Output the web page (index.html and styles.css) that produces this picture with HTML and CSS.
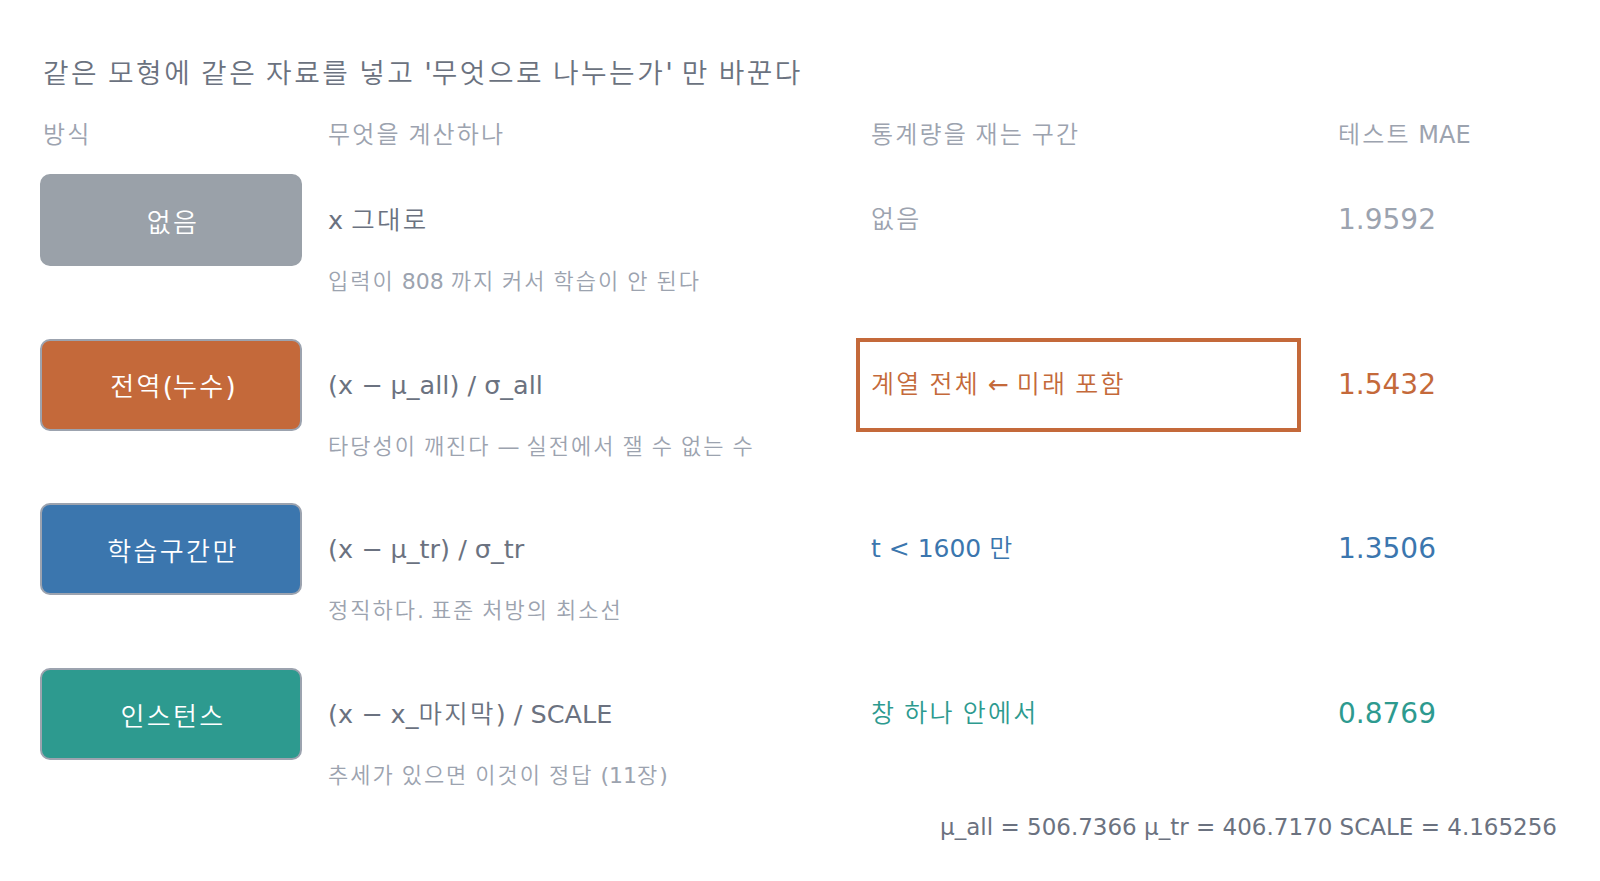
FILE: index.html
```html
<!DOCTYPE html>
<html lang="ko">
<head>
<meta charset="utf-8">
<link rel="stylesheet" href="styles.css">
</head>
<body>
<main class="page">
  <h1 class="title"><span class="ko">같은</span> <span class="ko">모형에</span> <span class="ko">같은</span> <span class="ko">자료를</span> <span class="ko">넣고</span> '<span class="ko">무엇으로</span> <span class="ko">나누는가</span>' <span class="ko">만</span> <span class="ko">바꾼다</span></h1>
  <div class="table">
    <div class="head">
      <div class="hcell c1"><span class="ko">방식</span></div>
      <div class="hcell c2"><span class="ko">무엇을</span> <span class="ko">계산하나</span></div>
      <div class="hcell c3"><span class="ko">통계량을</span> <span class="ko">재는</span> <span class="ko">구간</span></div>
      <div class="hcell c4"><span class="ko">테스트</span> MAE</div>
    </div>

    <div class="row">
      <div class="badge badge-none"><span class="ko">없음</span></div>
      <div class="main">x <span class="ko">그대로</span></div>
      <div class="stat stat-none"><span class="ko">없음</span></div>
      <div class="value v-none">1.9592</div>
      <div class="sub"><span class="ko">입력이</span> 808 <span class="ko">까지</span> <span class="ko">커서</span> <span class="ko">학습이</span> <span class="ko">안</span> <span class="ko">된다</span></div>
    </div>

    <div class="row">
      <div class="badge badge-global"><span class="lbl"><span class="ko">전역</span>(<span class="ko">누수</span>)</span></div>
      <div class="main">(x − μ_all) / σ_all</div>
      <div class="stat stat-global highlight"><span class="hl-text"><span class="ko">계열</span> <span class="ko">전체</span> ← <span class="ko">미래</span> <span class="ko">포함</span></span></div>
      <div class="value v-global">1.5432</div>
      <div class="sub"><span class="ko">타당성이</span> <span class="ko">깨진다</span> — <span class="ko">실전에서</span> <span class="ko">잴</span> <span class="ko">수</span> <span class="ko">없는</span> <span class="ko">수</span></div>
    </div>

    <div class="row">
      <div class="badge badge-train"><span class="ko">학습구간만</span></div>
      <div class="main">(x − μ_tr) / σ_tr</div>
      <div class="stat stat-train">t &lt; 1600 <span class="ko">만</span></div>
      <div class="value v-train">1.3506</div>
      <div class="sub"><span class="ko">정직하다</span>. <span class="ko">표준</span> <span class="ko">처방의</span> <span class="ko">최소선</span></div>
    </div>

    <div class="row">
      <div class="badge badge-inst"><span class="ko">인스턴스</span></div>
      <div class="main">(x − x_<span class="ko">마지막</span>) / SCALE</div>
      <div class="stat stat-inst"><span class="ko">창</span> <span class="ko">하나</span> <span class="ko">안에서</span></div>
      <div class="value v-inst">0.8769</div>
      <div class="sub"><span class="ko">추세가</span> <span class="ko">있으면</span> <span class="ko">이것이</span> <span class="ko">정답</span> (11<span class="ko">장</span>)</div>
    </div>
  </div>
  <p class="footer">μ_all = 506.7366 μ_tr = 406.7170 SCALE = 4.165256</p>
</main>
</body>
</html>
```

FILE: styles.css
```css
* { box-sizing: border-box; }
html, body {
  margin: 0;
  padding: 0;
  background: #ffffff;
}
body {
  font-family: "DejaVu Sans", "Noto Sans CJK KR", sans-serif;
  color: #6b7280;
}
.ko {
  letter-spacing: 0.09em;
  font-weight: 350;
}
.page {
  width: 1600px;
  height: 881px;
  padding: 56px 43px 0 40px;
}
.title {
  margin: 0 0 0 3px;
  font-size: 27.8px;
  font-weight: normal;
  line-height: 36px;
  color: #6b7280;
}
.table {
  margin-top: 28px;
}
.head, .row {
  display: grid;
  grid-template-columns: 288px 543px 467px 1fr;
}
.head {
  height: 30px;
  margin-bottom: 24px;
}
.hcell {
  font-size: 24px;
  line-height: 30px;
  color: #9ca3af;
}
.hcell.c1 { padding-left: 3px; }
.row {
  grid-template-rows: 92px 31px;
  margin-bottom: 41.7px;
  align-items: center;
}
.badge {
  grid-row: 1;
  grid-column: 1;
  width: 262px;
  height: 92px;
  border-radius: 10px;
  border: 2.5px solid #9ca3af;
  display: flex;
  align-items: center;
  justify-content: center;
  padding-left: 4px;
  font-size: 26px;
  color: #ffffff;
}
.badge-none { background: #9aa1a9; border-color: #9aa1a9; }
.badge-global { background: #c4693a; }
.badge-train { background: #3b76ae; }
.badge-inst { background: #2d9a8f; }
.main {
  grid-row: 1;
  grid-column: 2;
  font-size: 25.5px;
  line-height: 32px;
  color: #6b7280;
}
.stat {
  grid-row: 1;
  grid-column: 3;
  font-size: 25px;
  line-height: 32px;
}
.stat-none { color: #9ca3af; }
.stat-global { color: #c4693a; }
.stat-train { color: #3b76ae; }
.stat-inst { color: #2d9a8f; }
.highlight {
  width: 445px;
  height: 94px;
  margin-left: -15px;
  padding-left: 11px;
  border: 4px solid #c4693a;
  display: flex;
  align-items: center;
}
.value {
  grid-row: 1;
  grid-column: 4;
  font-size: 28px;
  line-height: 34px;
}
.v-none { color: #9ca3af; }
.v-global { color: #c4693a; }
.v-train { color: #3b76ae; }
.v-inst { color: #2d9a8f; }
.sub {
  grid-row: 2;
  grid-column: 2 / 5;
  align-self: end;
  font-size: 22px;
  line-height: 30px;
  color: #9ca3af;
}
.footer {
  margin: -21px 0 0 0;
  text-align: right;
  font-size: 23px;
  line-height: 30px;
  color: #6b7280;
}
```
